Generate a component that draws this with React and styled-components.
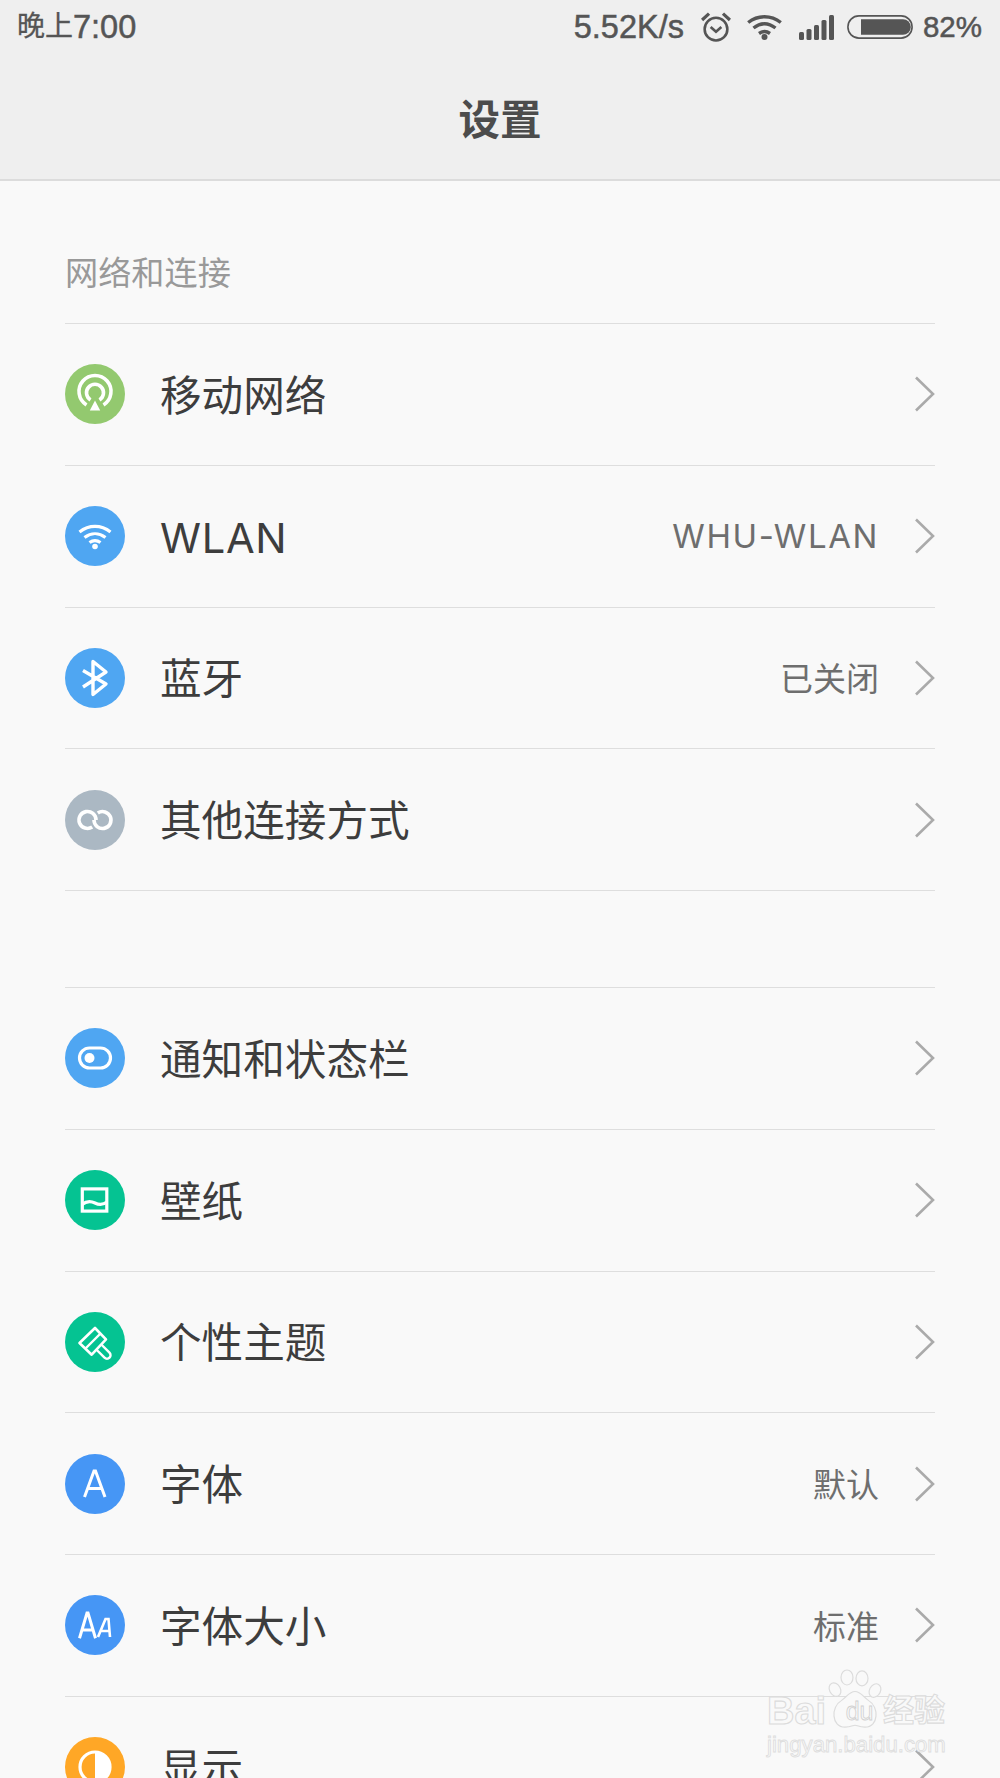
import React from "react";
import styled, { createGlobalStyle } from "styled-components";

const Global = createGlobalStyle`
  html, body { margin: 0; padding: 0; background: #f9f9f9; }
  body { font-family: "Liberation Sans", "Noto Sans CJK SC", sans-serif; }
`;

const Page = styled.div`
  position: relative;
  width: 1000px;
  height: 1778px;
  overflow: hidden;
  background: #f9f9f9;
`;

const Header = styled.header`
  height: 179px;
  background: #efefef;
  border-bottom: 2px solid #dcdcdc;
  display: flex;
  flex-direction: column;
`;

const StatusBar = styled.div`
  height: 54px;
  padding: 0 18px 0 17px;
  display: flex;
  align-items: center;
  justify-content: space-between;
  color: #555;
  font-size: 32.5px;
  line-height: 36px;
  -webkit-text-stroke: 0.5px #555;
`;

const StatusTime = styled.span`
  display: flex;
  align-items: center;
`;

const TimePrefix = styled.span`
  font-size: 28px;
  -webkit-text-stroke: 0.3px #555;
`;

const StatusRight = styled.div`
  display: flex;
  align-items: center;
`;

const Speed = styled.span`
  margin-right: 17px;
`;

const Battery = styled.span`
  font-size: 29.5px;
`;

const Title = styled.h1`
  margin: 0;
  flex: 1;
  display: flex;
  align-items: center;
  justify-content: center;
  color: #4c4c4c;
  font-size: 41.5px;
  font-weight: 700;
  font-family: "Noto Sans CJK SC", sans-serif;
`;

const Content = styled.main`
  padding: 0 65px;
`;

const SectionTitle = styled.div`
  height: 142px;
  box-sizing: border-box;
  padding-top: 67px;
  color: #999;
  font-size: 33.2px;
  line-height: 46px;
  font-family: "Noto Sans CJK SC", sans-serif;
`;

const List = styled.ul`
  margin: 0 0 ${(p) => p.$gap || 0}px;
  padding: 0;
  list-style: none;
  border-top: 1.5px solid #dedede;
`;

const Row = styled.li`
  height: 141.75px;
  box-sizing: border-box;
  border-bottom: 1.5px solid #dedede;
  display: flex;
  align-items: center;
`;

const IconBadge = styled.span`
  flex: none;
  width: 60px;
  height: 60px;
  border-radius: 50%;
  background: ${(p) => p.$color};
  display: block;
  svg {
    display: block;
    width: 60px;
    height: 60px;
  }
`;

const Label = styled.span`
  margin-left: 35px;
  flex: 1;
  color: #3d3d3d;
  font-size: 41.6px;
  font-weight: 400;
  font-family: "Inter", "Noto Sans CJK SC", sans-serif;
  padding: ${(p) => (p.$latin ? "4px 0 0" : "0 0 3px")};
  letter-spacing: ${(p) => (p.$latin ? "0.7px" : "0")};
`;

const Value = styled.span`
  margin-right: 35px;
  padding-bottom: 1px;
  color: #6e6e6e;
  font-size: 33px;
  font-weight: 400;
  font-family: "Inter", "Noto Sans CJK SC", sans-serif;
  letter-spacing: ${(p) => (p.$latin ? "1.6px" : "0")};
`;

const Chevron = styled.svg`
  flex: none;
  width: 21px;
  height: 36px;
  fill: none;
  stroke: #aaa;
  stroke-width: 2.6;
`;

const Watermark = styled.div`
  position: absolute;
  left: 767px;
  top: 1678px;
  width: 178px;
  color: #f9f9f9;
  pointer-events: none;
`;

const WatermarkBrand = styled.div`
  position: relative;
  margin-top: 17px;
  display: flex;
  align-items: center;
  justify-content: space-between;
  height: 32px;
  -webkit-text-stroke: 1.1px #dcdcdc;
  font-family: "Liberation Sans", "Noto Sans CJK SC", sans-serif;
`;

const BrandWord = styled.span`
  font-size: ${(p) => p.$size}px;
  font-weight: 700;
  line-height: 32px;
`;

const PawMark = styled.svg`
  position: absolute;
  left: 60px;
  top: -26px;
  width: 56px;
  height: 60px;
`;

const BrandDu = styled.span`
  position: relative;
  margin-left: 10px;
  font-size: 25px;
  line-height: 32px;
  -webkit-text-stroke: 0.8px #d0d0d0;
  color: transparent;
`;

const WatermarkUrl = styled.div`
  margin-top: 6px;
  font-size: 22.2px;
  line-height: 24px;
  white-space: nowrap;
  -webkit-text-stroke: 0.9px #dedede;
`;

const Glyph = ({ children }) => (
  <svg viewBox="0 0 60 60" fill="none" stroke="#fff" strokeWidth="3.2">
    {children}
  </svg>
);

const MobileIcon = () => (
  <Glyph>
    <path d="M21.5 41 A16 16 0 1 1 38.5 41" strokeWidth="3.6" />
    <path d="M25.5 36 A8.5 8.5 0 1 1 34.5 36" strokeWidth="3.6" />
    <path d="M30 36.5 L35.2 46.5 H24.8 Z" fill="#fff" stroke="none" />
  </Glyph>
);

const WifiIcon = () => (
  <Glyph>
    <path d="M14.5 26 C24 18.5 36 18.5 45.5 26" />
    <path d="M19.5 31.5 C26 26.5 34 26.5 40.5 31.5" />
    <path d="M24.5 36.5 C28 34 32 34 35.5 36.5" />
    <circle cx="30" cy="40.5" r="2.8" fill="#fff" stroke="none" />
  </Glyph>
);

const BluetoothIcon = () => (
  <Glyph>
    <path d="M18 22.5 L41 36 L28 46.5 V13.5 L41 24 L18 39" strokeWidth="3.4" strokeLinejoin="round" />
  </Glyph>
);

const LinkIcon = () => (
  <Glyph>
    <path d="M27.2 37.05 A8.5 8.5 0 1 1 31 30" strokeWidth="3.6" />
    <path d="M32.8 22.95 A8.5 8.5 0 1 1 29 30" strokeWidth="3.6" />
  </Glyph>
);

const ToggleIcon = () => (
  <Glyph>
    <rect x="14.5" y="20" width="31" height="20" rx="10" />
    <circle cx="24.5" cy="30" r="5" fill="#fff" stroke="none" />
  </Glyph>
);

const WallpaperIcon = () => (
  <Glyph>
    <rect x="17.3" y="18.9" width="24.5" height="22.2" />
    <path d="M17 34.5 C22 30.5 26 31 30 33 C34 35 38 35 42 32" />
  </Glyph>
);

const BrushIcon = () => (
  <Glyph>
    <path d="M30 16 L14.5 31 L26.7 42.7 L41 27.3 Z" strokeWidth="2.6" strokeLinejoin="round" />
    <path d="M20.5 36.5 L35.5 21.5" strokeWidth="2.4" />
    <path d="M31.3 37.5 L39.5 45.7 A3.5 3.5 0 0 0 44.5 40.7 L36.3 32.5" strokeWidth="2.4" strokeLinejoin="round" />
  </Glyph>
);

const LetterIcon = () => (
  <Glyph>
    <path d="M19.5 43 L29 17 H30.5 L40 43 M23 34.5 H36.5" strokeWidth="3" />
  </Glyph>
);

const LettersIcon = () => (
  <Glyph>
    <path d="M14.5 43.3 L22 18 H23 L30.5 43.3 M17.5 35 H27.5" strokeWidth="3" />
    <path d="M33 42 L40.5 24 H43.5 L45 42 M35.5 36 H44" strokeWidth="2.6" />
  </Glyph>
);

const DisplayIcon = () => (
  <Glyph>
    <circle cx="30" cy="30" r="15" />
    <path d="M30 15 A15 15 0 0 1 30 45 Z" fill="#fff" stroke="none" />
  </Glyph>
);

const ChevronRight = () => (
  <Chevron viewBox="0 0 21 36">
    <path d="M2 1.5 L19 18 L2 34.5" />
  </Chevron>
);

const AlarmIcon = () => (
  <svg width="30" height="30" viewBox="0 0 28 28" fill="none" stroke="#555" strokeWidth="2.4">
    <circle cx="14" cy="16" r="10.6" />
    <path d="M9 14 L14 18.5 L19 14" />
    <path d="M1 7.5 L7.5 1.5 M27 7.5 L20.5 1.5" strokeWidth="3" />
  </svg>
);

const StatusWifi = () => (
  <svg width="35" height="26" viewBox="0 0 35 26" fill="none" stroke="#555" strokeWidth="3.4">
    <path d="M1.2 8.5 C11 0.8 24 0.8 33.8 8.5" />
    <path d="M6.5 14 C13.5 8.5 21.5 8.5 28.5 14" />
    <path d="M12 19.5 C15.5 17 19.5 17 23 19.5" />
    <circle cx="17.5" cy="23" r="3" fill="#555" stroke="none" />
  </svg>
);

const StatusSignal = () => (
  <svg width="35" height="25" viewBox="0 0 35 25" fill="#555">
    <rect x="0" y="17" width="5" height="8" rx="1.5" />
    <rect x="7.5" y="14" width="5" height="11" rx="1.5" />
    <rect x="15" y="10" width="5" height="15" rx="1.5" />
    <rect x="22.5" y="5" width="5" height="20" rx="1.5" />
    <rect x="30" y="0" width="5" height="25" rx="1.5" />
  </svg>
);

const StatusBattery = () => (
  <svg width="66" height="24" viewBox="0 0 66 24">
    <rect x="0.9" y="0.9" width="64.2" height="22.2" rx="11" fill="none" stroke="#555" strokeWidth="1.6" />
    <path d="M14 4.2 H56 A7.8 7.8 0 0 1 56 19.8 H14 Z" fill="#555" />
  </svg>
);

const StatusIconSlot = styled.span`
  display: flex;
  margin-right: ${(p) => p.$gap}px;
`;

const networkRows = [
  { name: "移动网络", color: "#93c96f", icon: <MobileIcon /> },
  { name: "WLAN", value: "WHU-WLAN", latin: true, color: "#4fa6f2", icon: <WifiIcon /> },
  { name: "蓝牙", value: "已关闭", color: "#4fa6f2", icon: <BluetoothIcon /> },
  { name: "其他连接方式", color: "#abb8c3", icon: <LinkIcon /> },
];

const personalRows = [
  { name: "通知和状态栏", color: "#4fa6f2", icon: <ToggleIcon /> },
  { name: "壁纸", color: "#05c392", icon: <WallpaperIcon /> },
  { name: "个性主题", color: "#05c392", icon: <BrushIcon /> },
  { name: "字体", value: "默认", color: "#4696f5", icon: <LetterIcon /> },
  { name: "字体大小", value: "标准", color: "#4696f5", icon: <LettersIcon /> },
  { name: "显示", color: "#ffa726", icon: <DisplayIcon /> },
];

const SettingRow = ({ row }) => (
  <Row>
    <IconBadge $color={row.color}>{row.icon}</IconBadge>
    <Label $latin={row.latin}>{row.name}</Label>
    {row.value && <Value $latin={row.latin}>{row.value}</Value>}
    <ChevronRight />
  </Row>
);

export default function App() {
  return (
    <Page>
      <Global />
      <Header>
        <StatusBar>
          <StatusTime>
            <TimePrefix>晚上</TimePrefix>
            7:00
          </StatusTime>
          <StatusRight>
            <Speed>5.52K/s</Speed>
            <StatusIconSlot $gap={16}><AlarmIcon /></StatusIconSlot>
            <StatusIconSlot $gap={17}><StatusWifi /></StatusIconSlot>
            <StatusIconSlot $gap={13}><StatusSignal /></StatusIconSlot>
            <StatusIconSlot $gap={10}><StatusBattery /></StatusIconSlot>
            <Battery>82%</Battery>
          </StatusRight>
        </StatusBar>
        <Title>设置</Title>
      </Header>
      <Content>
        <SectionTitle>网络和连接</SectionTitle>
        <List $gap={96}>
          {networkRows.map((row) => (
            <SettingRow key={row.name} row={row} />
          ))}
        </List>
        <List>
          {personalRows.map((row) => (
            <SettingRow key={row.name} row={row} />
          ))}
        </List>
      </Content>
      <Watermark>
        <WatermarkBrand>
          <PawMark viewBox="0 0 56 64" preserveAspectRatio="none" fill="#f9f9f9" stroke="#dcdcdc" strokeWidth="1.2">
            <ellipse cx="8" cy="22" rx="5.5" ry="7.5" transform="rotate(-25 8 22)" />
            <ellipse cx="20" cy="9" rx="6" ry="8" />
            <ellipse cx="35" cy="10" rx="6" ry="8" />
            <ellipse cx="48" cy="23" rx="5.5" ry="7.5" transform="rotate(25 48 23)" />
            <path d="M28 24 C34 24 36 30 42 34 C52 40 52 62 38 62 C32 62 30 60 28 60 C26 60 24 62 18 62 C4 62 4 40 14 34 C20 30 22 24 28 24 Z" />
          </PawMark>
          <BrandWord $size={38}>Bai</BrandWord>
          <BrandDu>du</BrandDu>
          <BrandWord $size={31}>经验</BrandWord>
        </WatermarkBrand>
        <WatermarkUrl>jingyan.baidu.com</WatermarkUrl>
      </Watermark>
    </Page>
  );
}
